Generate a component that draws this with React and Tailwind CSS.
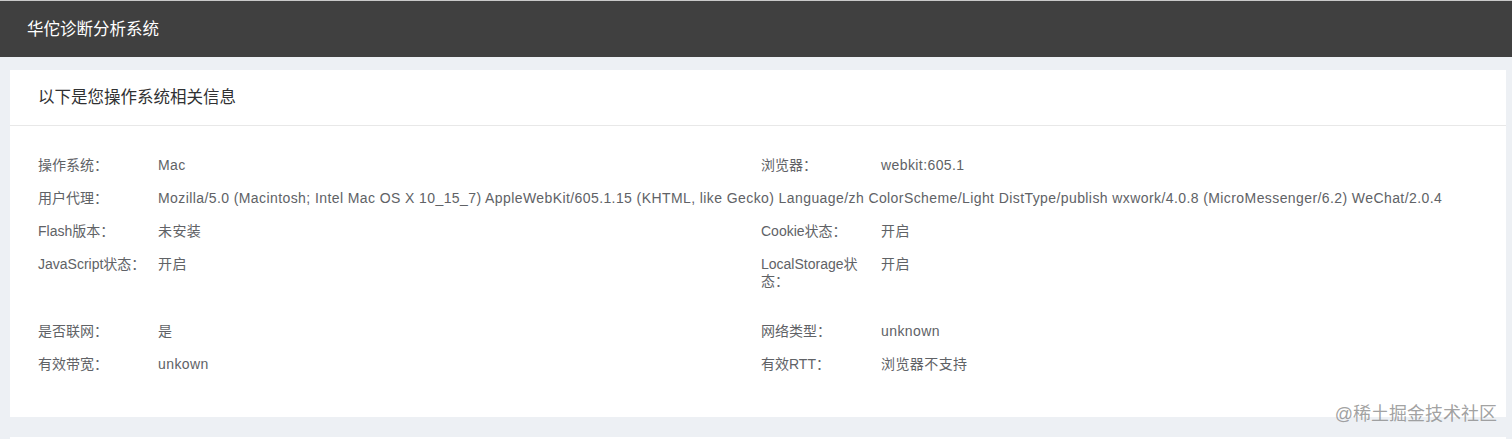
import React from "react";

const font = { fontFamily: '"Helvetica Neue", "Liberation Sans", "Noto Sans CJK SC", sans-serif' };

function Item({ label, value }) {
  return (
    <div className="flex">
      <div className="w-[120px] shrink-0 pr-[12px]">{label}</div>
      <div className="flex-1 tracking-[0.41px]">{value}</div>
    </div>
  );
}

function Row({ children, full }) {
  return (
    <div className={full ? "mb-[16px]" : "mb-[16px] grid grid-cols-[723px_1fr]"}>{children}</div>
  );
}

export default function App() {
  return (
    <div className="relative h-[439px] overflow-hidden bg-[#edf0f4] text-[14px] leading-[17px]" style={font}>
      <div className="h-[57px] border-t border-[#c9c9c9] bg-[#404040] flex items-center px-[27px] text-white text-[16.5px]">
        华佗诊断分析系统
      </div>
      <div className="ml-[10px] mr-[6px] mt-[13px] bg-white">
        <div className="h-[56px] border-b border-[#e8e8e8] flex items-center px-[28px] text-[16.5px] text-[#303133]">
          以下是您操作系统相关信息
        </div>
        <div className="px-[28px] pt-[31px] pb-[28px] text-[#606266]">
          <Row>
            <Item label="操作系统：" value="Mac" />
            <Item label="浏览器：" value="webkit:605.1" />
          </Row>
          <Row full>
            <Item
              label="用户代理："
              value="Mozilla/5.0 (Macintosh; Intel Mac OS X 10_15_7) AppleWebKit/605.1.15 (KHTML, like Gecko) Language/zh ColorScheme/Light DistType/publish wxwork/4.0.8 (MicroMessenger/6.2) WeChat/2.0.4"
            />
          </Row>
          <Row>
            <Item label="Flash版本：" value="未安装" />
            <Item label="Cookie状态：" value="开启" />
          </Row>
          <Row>
            <Item label="JavaScript状态：" value="开启" />
            <Item label="LocalStorage状态：" value="开启" />
          </Row>
          <div className="h-[17px]" />
          <Row>
            <Item label="是否联网：" value="是" />
            <Item label="网络类型：" value="unknown" />
          </Row>
          <Row>
            <Item label="有效带宽：" value="unkown" />
            <Item label="有效RTT：" value="浏览器不支持" />
          </Row>
        </div>
      </div>
      <div className="ml-[10px] mr-[6px] mt-[20px] h-[20px] bg-white" />
      <div className="absolute right-[15px] top-[402px] text-[18px] leading-[24px] text-[#8a8a8a]/80">
        @稀土掘金技术社区
      </div>
    </div>
  );
}
